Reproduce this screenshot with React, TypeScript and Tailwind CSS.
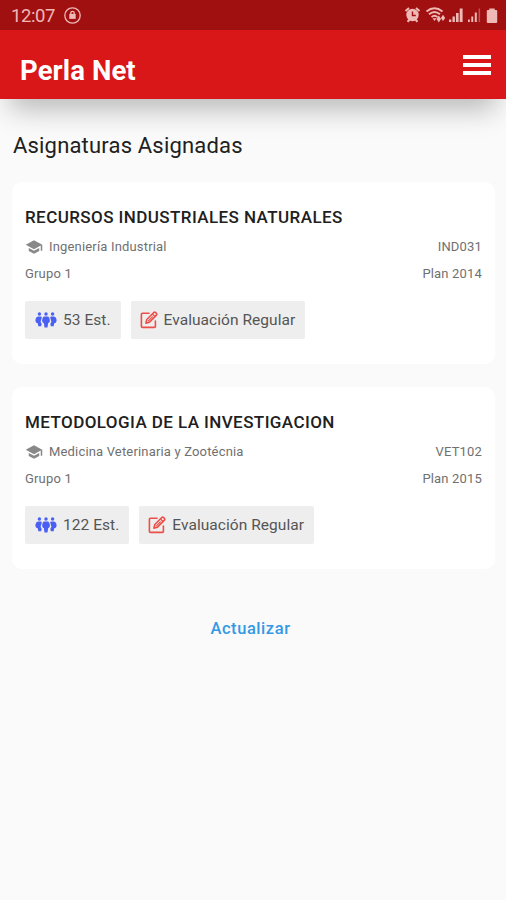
import { MdSchool } from "react-icons/md";

type Subject = {
	name: string;
	career: string;
	code: string;
	group: string;
	plan: string;
	students: number;
	evaluation: string;
};

const subjects: Subject[] = [
	{
		name: "RECURSOS INDUSTRIALES NATURALES",
		career: "Ingeniería Industrial",
		code: "IND031",
		group: "Grupo 1",
		plan: "Plan 2014",
		students: 53,
		evaluation: "Evaluación Regular",
	},
	{
		name: "METODOLOGIA DE LA INVESTIGACION",
		career: "Medicina Veterinaria y Zootécnia",
		code: "VET102",
		group: "Grupo 1",
		plan: "Plan 2015",
		students: 122,
		evaluation: "Evaluación Regular",
	},
];

const StudentsIcon = () => (
	<svg className="w-[22px] h-4 shrink-0" viewBox="0 0 22 16" fill="#4a60f2">
		<circle cx="4.4" cy="2" r="1.7" />
		<circle cx="11" cy="2" r="1.7" />
		<circle cx="17.6" cy="2" r="1.7" />
		<path d="M3 4.600h2.800q1 0 1 1L5.600 9.700l1.100 2.200-.6 2.300H3.300L2.900 11.600Q.4 11 .4 8.800Q.6 5.200 3 4.600z" />
		<path d="M19 4.600h-2.800q-1 0-1 1l1.200 4.100-1.100 2.200.6 2.300h2.800l.4-2.600q2.500-.6 2.500-2.800Q21.400 5.200 19 4.600z" />
		<path d="M8.800 4.600h4.400q1.600 1 1.700 4.200 0 1.900-1.800 2.400l-.6 4.200h-3l-.6-4.200Q7.100 10.700 7.100 8.800q.1-3.200 1.700-4.200z" />
	</svg>
);

const EditIcon = () => (
	<svg
		className="w-[18px] h-[18px] shrink-0"
		viewBox="0 0 18 18"
		fill="none"
		stroke="#ec4f47"
		strokeWidth="1.6"
		strokeLinejoin="round"
		strokeLinecap="round"
	>
		<path d="M9 2.200H2.400q-1 0-1 1v12.200q0 1 1 1h12q1 0 1-1V10" />
		<path d="M5.900 12.100l.9-3.600 7-7q.9-.8 1.900.1l.6.600q.9.900.1 1.900l-6.900 7.100z" />
		<path d="M12.500 3l2.500 2.500M8.400 9.900l4-4" strokeWidth="1.200" />
	</svg>
);

const StatusBar = () => (
	<div className="h-[30px] bg-[#a11010] text-[#efb9b6] flex items-center justify-between pl-[11px] pr-[8px]">
		<div className="flex items-center gap-[9px] pt-[2px]">
			<span className="text-[18.5px] leading-none tracking-[-0.4px]">12:07</span>
			<svg className="w-[18px] h-[18px]" viewBox="0 0 18 18" fill="none" stroke="currentColor">
				<circle cx="8.500" cy="8.500" r="7.700" strokeWidth="1.300" />
				<path d="M6.800 7.500V6a1.700 1.700 0 0 1 3.400 0v1.500" strokeWidth="1.300" />
				<rect x="5.300" y="6.900" width="6.400" height="5" fill="currentColor" stroke="none" />
			</svg>
		</div>
		<svg className="w-[94px] h-[18px]" viewBox="404 6 94 18" fill="currentColor">
			{/* alarm */}
			<circle cx="412.500" cy="15" r="6.200" />
			<path d="M405.500 11l3.500-3M419.500 11l-3.500-3M407.500 21.800l2-2M417.500 21.800l-2-2" stroke="currentColor" strokeWidth="2" />
			<path d="M412.500 11.500v4h3.300" fill="none" stroke="#a11010" strokeWidth="1.400" />
			{/* wifi */}
			<g fill="none" stroke="currentColor" strokeWidth="1.900">
				<path d="M426.500 11.500q8-6.500 16 0" />
				<path d="M429 14.300q5.500-4.600 11 0" />
				<path d="M431.500 17q3-2.500 6 0" />
			</g>
			<path d="M432.500 18.300h4l-2 2.700zM436.500 19l2.300-3.500 2.200 3.500-2.200 3.500zM440.800 18l2.200-3.200 2.200 3.200-2.200 3z" />
			{/* signal */}
			<path d="M449 19.500h2.300V22H449zM452.500 16.500h2.400V22h-2.400zM456 13h2.600v9H456zM459.700 8.500h2.900V22h-2.900z" />
			<path d="M468 19.500h1.800V22H468zM471.300 16.500h1.900V22h-1.900zM474.800 12.500h2V22h-2z" />
			<path d="M478.600 8.500h1.500V22h-1.500z" opacity=".4" />
			{/* battery */}
			<path d="M489.300 8.500h5.400V10h1.500q1 0 1 1v11q0 1-1 1h-8.400q-1 0-1-1V11q0-1 1-1h1.500z" />
		</svg>
	</div>
);

const SubjectCard = ({ subject }: { subject: Subject }) => (
	<div className="bg-white rounded-[10px] h-[182px] px-[13px] pt-[23px]">
		<h2 className="text-[17px] leading-[24px] font-medium text-[#202020] tracking-[0.42px] whitespace-nowrap">
			{subject.name}
		</h2>
		<div className="mt-[8px] h-5 flex items-center justify-between text-[13px] text-[#707070] tracking-[0.17px]">
			<div className="flex items-center gap-[6px]">
				<MdSchool className="w-[18px] h-[18px] text-[#888888]" />
				<span>{subject.career}</span>
			</div>
			<span>{subject.code}</span>
		</div>
		<div className="mt-[7px] h-5 flex items-center justify-between text-[13px] text-[#707070] tracking-[0.17px]">
			<span>{subject.group}</span>
			<span>{subject.plan}</span>
		</div>
		<div className="mt-[17px] flex gap-[10px] text-[15.5px] text-[#555555] tracking-[0.05px]">
			<div className="h-[38px] bg-[#eeeeee] rounded-[2px] flex items-center gap-[6px] px-[10px]">
				<StudentsIcon />
				<span className="pt-px">{subject.students} Est.</span>
			</div>
			<div className="h-[38px] bg-[#eeeeee] rounded-[2px] flex items-center gap-[6px] pl-[9px] pr-[10px]">
				<EditIcon />
				<span className="pt-px">{subject.evaluation}</span>
			</div>
		</div>
	</div>
);

export default function App() {
	return (
		<div className="w-full h-screen overflow-hidden bg-[#fafafa] font-['Roboto',sans-serif]">
			<StatusBar />
			<header className="h-[69px] bg-[#d91718] flex items-center justify-between pl-5 pr-[15px] shadow-[0_20px_28px_-10px_rgba(0,0,0,0.27)]">
				<h1 className="text-[27.5px] leading-none font-bold text-white tracking-[0.1px] pt-[13px]">
					Perla Net
				</h1>
				<button className="flex flex-col gap-1 w-7 text-white" aria-label="Menu">
					<span className="h-1 bg-white" />
					<span className="h-1 bg-white" />
					<span className="h-1 bg-white" />
				</button>
			</header>

			<main className="pl-[12px] pr-[11px] pt-[32px]">
				<h2 className="pl-px text-[22px] leading-[30px] text-[#202020] tracking-[0.18px]">
					Asignaturas Asignadas
				</h2>
				<div className="mt-[21px] flex flex-col gap-[23px]">
					{subjects.map(subject => (
						<SubjectCard key={subject.code} subject={subject} />
					))}
				</div>
				<div className="mt-[48px] pr-[6px] flex justify-center">
					<button className="text-[16.5px] leading-6 font-medium text-[#3498e5] tracking-[0.55px]">
						Actualizar
					</button>
				</div>
			</main>
		</div>
	);
}
